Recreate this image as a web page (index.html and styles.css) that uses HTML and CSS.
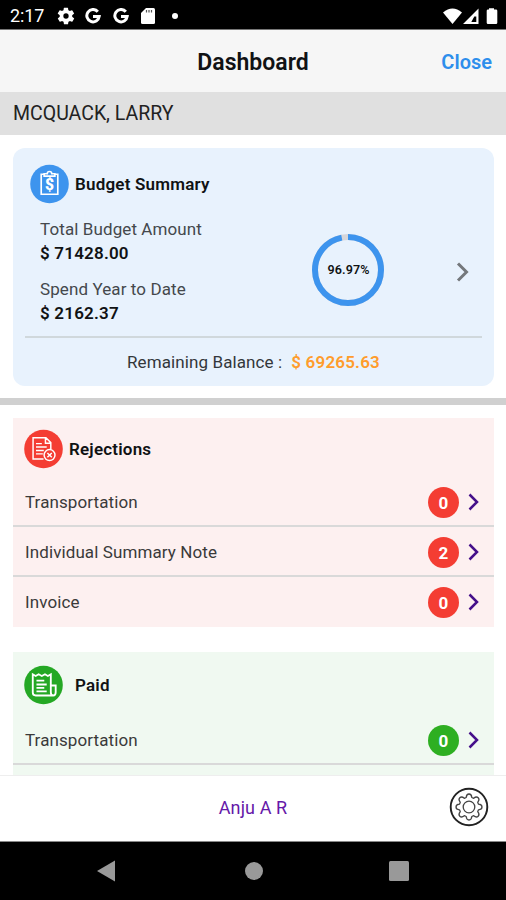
FILE: index.html
```html
<!DOCTYPE html>
<html lang="en">
<head>
  <meta charset="UTF-8" />
  <meta name="viewport" content="width=device-width, initial-scale=1.0"/>
  <title>Dashboard</title>
  <link rel="stylesheet" href="styles.css">
</head>
<body>
  <!-- Status bar -->
  <div class="statusbar">
    <span class="time">2:17</span>
    <svg class="gear" width="20" height="20" viewBox="0 0 24 24" fill="#fff"><path d="M19.4 13a7.500 7.500 0 0 0 0-2l2.100-1.600a.5.5 0 0 0 .1-.7l-2-3.400a.5.5 0 0 0-.6-.2l-2.500 1a7.300 7.300 0 0 0-1.700-1l-.4-2.600a.5.5 0 0 0-.5-.5h-4a.5.5 0 0 0-.5.5L9 5.100a7.300 7.300 0 0 0-1.700 1l-2.500-1a.5.5 0 0 0-.6.2l-2 3.400a.5.5 0 0 0 .1.700L4.500 11a7.500 7.500 0 0 0 0 2l-2.100 1.600a.5.5 0 0 0-.1.700l2 3.400c.1.200.4.300.6.200l2.500-1a7.300 7.300 0 0 0 1.700 1l.4 2.600c0 .3.200.5.500.5h4c.3 0 .5-.2.500-.5l.4-2.600a7.300 7.300 0 0 0 1.700-1l2.500 1c.2.100.5 0 .6-.2l2-3.400a.5.5 0 0 0-.1-.7zM12 15.200a3.200 3.200 0 1 1 0-6.400 3.200 3.200 0 0 1 0 6.400z"/></svg>
    <svg class="google" width="16" height="16" viewBox="0 0 16 16" fill="none" stroke="#fff" stroke-width="3"><path d="M12.800 3.700A6.200 6.200 0 1 0 14.200 8.400H8"/></svg>
    <svg class="google" width="16" height="16" viewBox="0 0 16 16" fill="none" stroke="#fff" stroke-width="3"><path d="M12.800 3.700A6.200 6.200 0 1 0 14.200 8.400H8"/></svg>
    <svg width="14" height="16" viewBox="0 0 14 16"><path fill="#fff" d="M5 0h7.500Q14 0 14 1.500v13q0 1.500-1.500 1.500h-11Q0 16 0 14.500V5z"/><path stroke="#555" stroke-width="1.200" d="M5.500 2v2.500M8 2v2.500M10.500 2v2.500"/></svg>
    <span class="dot"></span>
    <svg class="signals" width="55" height="16" viewBox="0 0 55 16" fill="#fff"><path d="M0 4.500Q9.500-3.500 19 4.500L9.500 16z"/><path fill-rule="evenodd" d="M20 16L35.500.5V16zM28.300 14h5V8.500h-2z"/><path d="M46 1.500V.3h5v1.200h2q1.300 0 1.300 1.300v11.900q0 1.300-1.300 1.300h-8q-1.300 0-1.300-1.300V2.800q0-1.300 1.300-1.300z"/></svg>
  </div>

  <header class="header">
    <span></span>
    <h1>Dashboard</h1>
    <a class="close">Close</a>
  </header>
  <div class="person">MCQUACK, LARRY</div>

  <main class="content">
    <!-- Budget -->
    <section class="budget">
      <div class="budget-title">
        <svg width="39" height="40" viewBox="0 0 40 40"><circle cx="20" cy="20" r="19.800" fill="#3d94ee"/><g fill="none" stroke="#fff" stroke-width="1.700"><path d="M15 10h-3.500V30.500h17V10H25"/><path d="M14.500 12V9.500h3.200q0-2.300 2.300-2.300t2.300 2.300h3.200V12z"/></g><text class="dollar" x="20" y="26" text-anchor="middle">$</text></svg>
        <h2>Budget Summary</h2>
      </div>
      <div class="budget-body">
        <div class="amounts">
          <div class="label">Total Budget Amount</div>
          <div class="value">$ 71428.00</div>
          <div class="label second">Spend Year to Date</div>
          <div class="value">$ 2162.37</div>
        </div>
        <div class="ring">
          <svg width="72" height="72" viewBox="0 0 72 72" fill="none" stroke-width="6"><circle cx="36" cy="36" r="33" stroke="#d6d6da"/><circle cx="36" cy="36" r="33" stroke="#3d94ee" pathLength="100" stroke-dasharray="96.970 100" transform="rotate(-90 36 36)"/><text x="36.500" y="40" text-anchor="middle">96.97%</text></svg>
        </div>
        <svg class="arrow" width="14" height="20" viewBox="0 0 14 20" fill="none" stroke="#74787c" stroke-width="3"><path d="M2 1.500l8.500 8.500L2 18.500"/></svg>
      </div>
      <div class="remaining"><span>Remaining Balance :</span><b>$ 69265.63</b></div>
    </section>

    <div class="divider"></div>

    <!-- Rejections -->
    <section class="panel red">
      <div class="panel-title">
        <svg width="39" height="40" viewBox="0 0 40 40"><circle cx="20" cy="20" r="19.800" fill="#f43d33"/><g fill="none" stroke="#fff" stroke-width="1.500"><path d="M20 30.300H9.300V8.500h13.200l5 5v6.500M22 8.500v5.500h5.500M12.300 14.500h6M12.300 18h11M12.300 21.500h8M12.300 25h7"/><circle cx="26.200" cy="26.200" r="5.600"/><path d="M24 24l4.500 4.500M28.500 24L24 28.500"/></g></svg>
        <h2>Rejections</h2>
      </div>
      <div class="row">
        <span>Transportation</span>
        <span class="count">0</span>
        <svg width="12" height="18" viewBox="0 0 12 18"><path d="M1.500 1.500L9 9l-7.500 7.500"/></svg>
      </div>
      <div class="row">
        <span>Individual Summary Note</span>
        <span class="count">2</span>
        <svg width="12" height="18" viewBox="0 0 12 18"><path d="M1.500 1.500L9 9l-7.500 7.500"/></svg>
      </div>
      <div class="row">
        <span>Invoice</span>
        <span class="count">0</span>
        <svg width="12" height="18" viewBox="0 0 12 18"><path d="M1.500 1.500L9 9l-7.500 7.500"/></svg>
      </div>
    </section>

    <!-- Paid -->
    <section class="panel green">
      <div class="panel-title">
        <svg width="39" height="40" viewBox="0 0 40 40"><circle cx="20" cy="20" r="19.800" fill="#24a824"/><g fill="none" stroke="#fff" stroke-width="1.900"><path d="M30 30.800H12q-3 0-3-3V9l3 1.800L15 9l3.300 1.800L21.500 9l3 1.800L27.500 9v18.500q0 3.300 2.500 3.300t2.500-3.300V20.500h-5M12.800 15.500h8M12.800 19.500h10.500M12.800 23h8M12.800 26.500h10.500"/></g></svg>
        <h2>Paid</h2>
      </div>
      <div class="row">
        <span>Transportation</span>
        <span class="count">0</span>
        <svg width="12" height="18" viewBox="0 0 12 18"><path d="M1.500 1.500L9 9l-7.500 7.500"/></svg>
      </div>
      <div class="row"></div>
    </section>
  </main>

  <footer class="footer">
    <span></span>
    <span class="user">Anju A R</span>
    <svg class="settings" width="40" height="40" viewBox="0 0 40 40" fill="none" stroke="#222"><circle cx="20" cy="20" r="18.300" stroke-width="1.900"/><path stroke="#444" stroke-width="1.300" stroke-linejoin="round" d="M17.200 10.500q.3-3.500 2.800-3.500t2.800 3.500l1.900.8q2.700-2.300 4.500-.5t-.5 4.500l.8 1.900q3.500.3 3.500 2.800t-3.500 2.800l-.8 1.900q2.300 2.700.5 4.500t-4.500-.5l-1.900.8q-.3 3.500-2.800 3.500t-2.800-3.500l-1.900-.8q-2.700 2.300-4.500.5t.5-4.500l-.8-1.900Q7 22.500 7 20t3.500-2.800l.8-1.900q-2.300-2.700-.5-4.500t4.500.5z"/><circle cx="20" cy="20" r="5.800" stroke="#444" stroke-width="1.300"/></svg>
  </footer>

  <div class="navbar">
    <svg width="18" height="22" viewBox="0 0 18 22"><path d="M0 11L18 .5v21z"/></svg>
    <svg class="home" width="18" height="18" viewBox="0 0 18 18"><circle cx="9" cy="9" r="9"/></svg>
    <svg width="20" height="20" viewBox="0 0 20 20"><rect width="20" height="20" rx="1.500"/></svg>
  </div>
</body>
</html>
```
FILE: styles.css
```css
* {
  box-sizing: border-box;
}

body {
  margin: 0;
  height: 900px;
  display: flex;
  flex-direction: column;
  overflow: hidden;
  font-family: Roboto, sans-serif;
  font-size: 17px;
  letter-spacing: 0.1px;
  color: #101214;
  background-color: #fff;
}

h1, h2 {
  margin: 0;
  font-weight: 600;
}

svg {
  display: block;
  flex: none;
}

.statusbar {
  height: 30px;
  flex: none;
  display: flex;
  align-items: center;
  padding: 2px 8px 0 10px;
  background-color: #000;
  border-bottom: 1px solid #777;
  color: #fff;
}

.time {
  width: 46px;
  font-size: 18px;
  letter-spacing: -0.1px;
}

.gear {
  margin-right: 9px;
}

.google {
  margin-right: 12px;
}

.dot {
  width: 6px;
  height: 6px;
  margin-left: 17px;
  border-radius: 50%;
  background-color: #fff;
}

.signals {
  margin-left: auto;
}

.header {
  height: 62px;
  flex: none;
  display: grid;
  grid-template-columns: 1fr auto 1fr;
  align-items: center;
  padding: 2px 14px 0;
  background-color: #f6f6f6;
}

.header h1 {
  font-size: 23px;
  letter-spacing: 0;
}

.close {
  justify-self: end;
  font-size: 20px;
  font-weight: 600;
  letter-spacing: 0;
  color: #2e8eec;
}

.person {
  height: 43px;
  flex: none;
  padding-left: 13px;
  line-height: 44px;
  font-size: 19.5px;
  letter-spacing: 0;
  color: #222;
  background-color: #e0e0e0;
}

.content {
  flex: 1;
  min-height: 0;
  overflow: hidden;
}

.budget {
  height: 238px;
  margin: 13px 12px 12px 13px;
  padding: 16px 12px 0;
  border-radius: 12px;
  background-color: #e8f2fd;
}

.budget-title {
  display: flex;
  align-items: center;
  gap: 6px;
  padding-left: 5px;
}

h2 {
  font-size: 17px;
  letter-spacing: 0.2px;
}

.dollar {
  font-size: 16px;
  font-weight: 900;
  fill: #fff;
}

.budget-body {
  height: 134px;
  display: flex;
  align-items: flex-start;
  padding: 13px 12px 0 15px;
  border-bottom: 2px solid #d0d8dc;
}

.amounts {
  width: 272px;
  line-height: 24px;
}

.label {
  color: #44484c;
}

.second {
  margin-top: 12px;
}

.value {
  font-weight: 600;
  letter-spacing: 0.2px;
}

.ring {
  margin-top: 17px;
}

.ring text {
  font-size: 12.5px;
  font-weight: 600;
  fill: #101214;
}

.arrow {
  margin: 45px 0 0 auto;
}

.remaining {
  display: flex;
  justify-content: center;
  gap: 9px;
  line-height: 48px;
}

.remaining span {
  color: #33373b;
}

.remaining b {
  font-weight: 600;
  letter-spacing: 0.2px;
  color: #ff9c2b;
}

.divider {
  height: 7px;
  background-color: #d0d0d0;
}

.panel {
  margin: 13px 12px 0 13px;
}

.panel-title {
  height: 59px;
  display: flex;
  align-items: center;
  gap: 6px;
  padding: 2px 0 0 11px;
}

.row {
  height: 50px;
  display: flex;
  align-items: center;
  padding: 2px 14px 0 12px;
  border-bottom: 2px solid #d9d9d9;
  color: #3a3a3a;
}

.row:last-child {
  padding-top: 0;
  border-bottom: none;
}

.row svg {
  fill: none;
  stroke: #45108a;
  stroke-width: 2.5;
}

.count {
  width: 31px;
  height: 31px;
  margin: 0 9px 0 auto;
  border-radius: 50%;
  line-height: 32px;
  text-align: center;
  font-weight: 700;
  color: #fff;
}

.red {
  background-color: #fdf0f0;
}

.red .count {
  background-color: #f43d33;
}

.green {
  margin-top: 25px;
  background-color: #f0f9f1;
}

.green .count {
  background-color: #2eaf22;
}

.green .panel-title {
  height: 63px;
  gap: 12px;
}

.footer {
  height: 67px;
  flex: none;
  display: grid;
  grid-template-columns: 1fr auto 1fr;
  align-items: center;
  padding: 0 17px 3px;
  border-top: 1px solid #eee;
  border-bottom: 1px solid #888;
}

.user {
  font-size: 18px;
  color: #6518a8;
}

.settings {
  justify-self: end;
}

.navbar {
  height: 58px;
  flex: none;
  display: flex;
  align-items: center;
  justify-content: space-between;
  padding: 0 97px;
  background-color: #000;
}

.navbar svg {
  fill: #999;
}

.navbar .home {
  margin-left: 3px;
}
```
